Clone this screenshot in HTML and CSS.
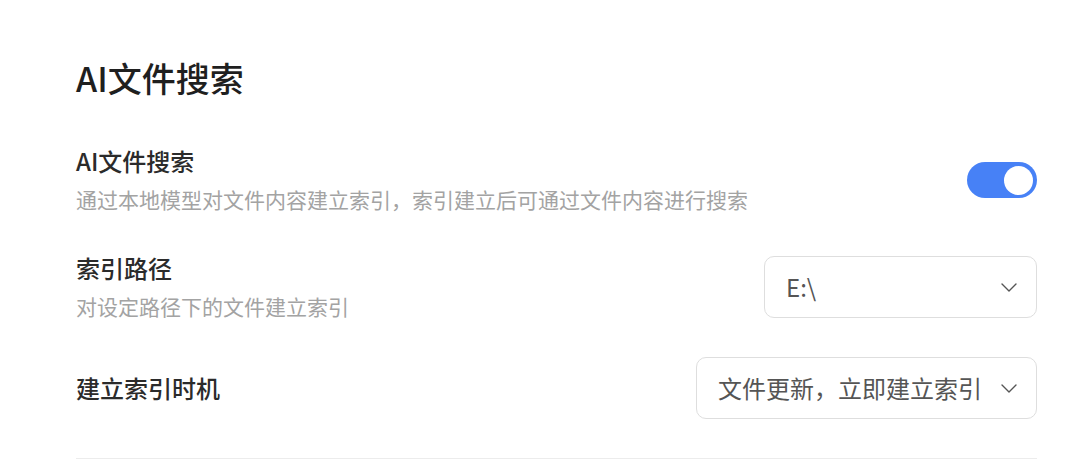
FILE: index.html
```html
<!DOCTYPE html>
<html lang="zh-CN">
<head>
<meta charset="utf-8">
<title>AI文件搜索</title>
<link rel="stylesheet" href="styles.css">
</head>
<body>
<main class="settings">
  <h1 class="page-title">AI文件搜索</h1>

  <section class="setting-list">
    <div class="setting-row row-search">
      <div class="setting-text">
        <div class="setting-label">AI文件搜索</div>
        <div class="setting-desc">通过本地模型对文件内容建立索引，索引建立后可通过文件内容进行搜索</div>
      </div>
      <div class="switch is-on" role="switch" aria-checked="true"><span class="switch-knob"></span></div>
    </div>

    <div class="setting-row row-path">
      <div class="setting-text">
        <div class="setting-label">索引路径</div>
        <div class="setting-desc">对设定路径下的文件建立索引</div>
      </div>
      <div class="select select-path">
        <span class="select-value">E:\</span>
        <svg class="select-arrow" width="16" height="9" viewBox="0 0 16 9"><polyline points="1,1 8,8 15,1" fill="none" stroke="#555" stroke-width="1.4" stroke-linecap="round" stroke-linejoin="round"/></svg>
      </div>
    </div>

    <div class="setting-row row-timing">
      <div class="setting-text">
        <div class="setting-label">建立索引时机</div>
      </div>
      <div class="select select-timing">
        <span class="select-value">文件更新，立即建立索引</span>
        <svg class="select-arrow" width="16" height="9" viewBox="0 0 16 9"><polyline points="1,1 8,8 15,1" fill="none" stroke="#555" stroke-width="1.4" stroke-linecap="round" stroke-linejoin="round"/></svg>
      </div>
    </div>
  </section>

  <hr class="divider">
</main>
</body>
</html>
```

FILE: styles.css
```css
html, body {
  margin: 0;
  padding: 0;
  background: #ffffff;
}

body {
  font-family: "Noto Sans CJK SC", "Noto Sans", sans-serif;
  color: #222;
}

.settings {
  padding: 56px 43px 0 76px;
}

.page-title {
  margin: 0;
  font-size: 34px;
  line-height: 44px;
  font-weight: 500;
  color: #1f1f1f;
}

.setting-list {
  margin-top: 45px;
  display: flex;
  flex-direction: column;
}

.setting-row {
  display: flex;
  align-items: center;
  justify-content: space-between;
}

.row-path {
  margin-top: 37px;
}

.row-timing {
  margin-top: 35px;
}

.setting-text {
  display: flex;
  flex-direction: column;
}

.setting-label {
  font-size: 24px;
  line-height: 32px;
  font-weight: 500;
  color: #2b2b2b;
}

.setting-desc {
  margin-top: 6px;
  font-size: 21px;
  line-height: 32px;
  color: #a3a3a3;
}

.switch {
  width: 70px;
  height: 36px;
  border-radius: 18px;
  background: #4781f6;
  display: flex;
  align-items: center;
  justify-content: flex-end;
  padding: 0 4px;
  box-sizing: border-box;
}

.switch-knob {
  width: 29px;
  height: 29px;
  border-radius: 50%;
  background: #ffffff;
}

.select {
  height: 62px;
  box-sizing: border-box;
  border: 1px solid #dedede;
  border-radius: 10px;
  display: flex;
  align-items: center;
  justify-content: space-between;
  padding: 0 19px 0 21px;
  background: #fff;
}

.select-path {
  width: 273px;
}

.select-timing {
  width: 341px;
  gap: 14px;
}

.select-value {
  font-size: 24px;
  line-height: 30px;
  color: #555;
  white-space: nowrap;
}

.select-arrow {
  flex: none;
}

.divider {
  margin: 39px 0 0;
  border: 0;
  border-top: 1px solid #ececec;
  height: 0;
}
```
